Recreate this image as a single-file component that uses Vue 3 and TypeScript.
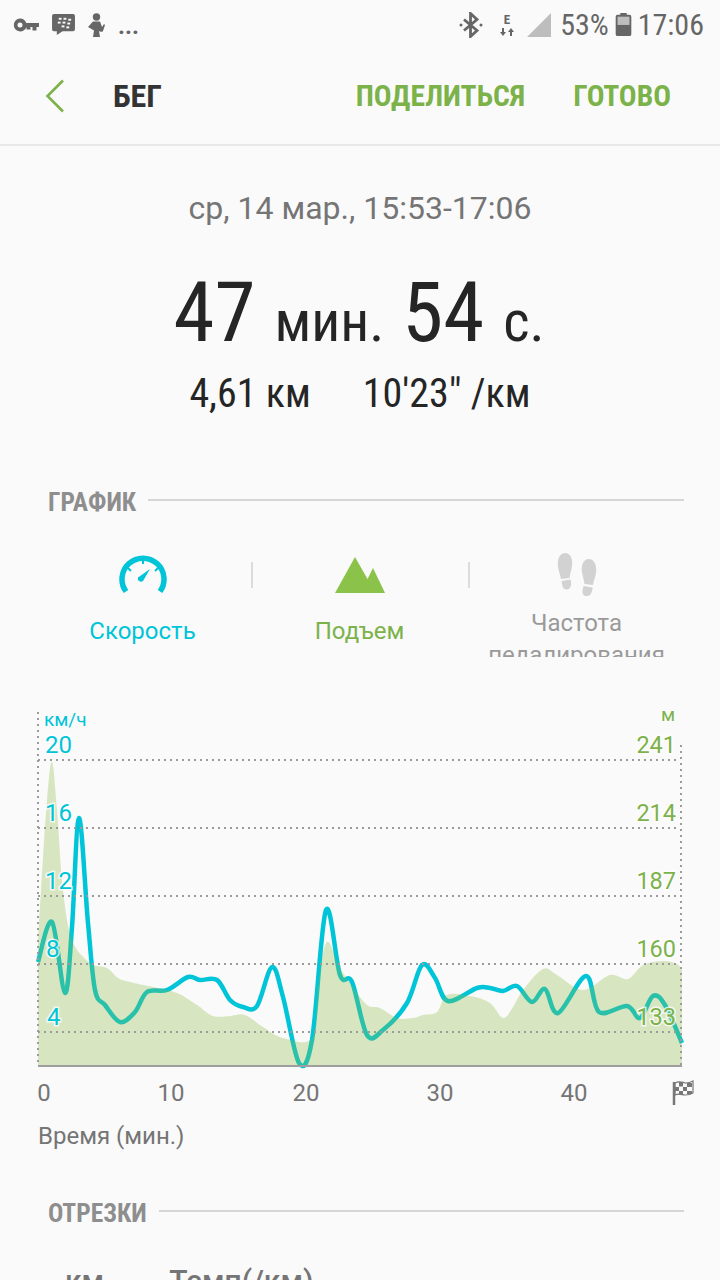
<template>
  <div class="page">
    <div class="status-bar">
      <div class="status-left">
        <svg class="ic" width="27" height="16" viewBox="0 0 27 16"><path fill="#666" fill-rule="evenodd" d="M7 1.500a6.500 6.500 0 0 1 6.200 4.500H26v4h-2.500v3.500h-4V10h-2v2.500h-4V10A6.500 6.500 0 1 1 7 1.500zm0 4a2.500 2.500 0 1 0 0 5 2.500 2.500 0 0 0 0-5z"/></svg>
        <svg class="ic" width="23" height="21" viewBox="0 0 24 22"><path fill="#666" d="M2 0h20a2 2 0 0 1 2 2v14a2 2 0 0 1-2 2H11l-6 4v-4H2a2 2 0 0 1-2-2V2a2 2 0 0 1 2-2z"/><g fill="#fafafa"><rect x="7" y="4" width="3" height="2"/><rect x="12" y="4" width="3" height="2"/><rect x="17" y="5" width="3" height="2"/><rect x="6" y="8" width="3" height="2"/><rect x="11" y="8" width="3" height="2"/><rect x="16" y="9" width="3" height="2"/><rect x="10" y="12" width="3" height="2"/><rect x="15" y="13" width="3" height="2"/></g></svg>
        <svg class="ic runner" width="19" height="24" viewBox="0 0 19 24"><circle cx="9.500" cy="4" r="3.700" fill="#666"/><path fill="#666" d="M6 8.500h7l2 5.500 2-3 1 1-2 6c-.5 1-2 1-3 .5l-1-.5 1 6H6l1-6.500L1 14l5-5.500z"/></svg>
        <span class="dots">...</span>
      </div>
      <div class="status-right">
        <svg class="ic" width="24" height="26" viewBox="0 0 24 26"><path fill="none" stroke="#666" stroke-width="2.800" d="M5 7.500l13 11-6.500 6V1.500l6.500 6-13 11"/><circle cx="2" cy="13" r="1.500" fill="#666"/><circle cx="22" cy="13" r="1.500" fill="#666"/></svg>
        <svg class="ic net" width="16" height="24" viewBox="0 0 16 24"><text x="8" y="11" text-anchor="middle" class="net-e">E</text><path fill="#666" d="M3 15h2v4h2l-3 4-3-4h2zM11 23h2v-4h2l-3-4-3 4h2z"/></svg>
        <svg class="ic signal" width="24" height="24" viewBox="0 0 24 24"><path fill="#bdbdbd" d="M24 0v24H0z"/></svg>
        <span class="pct">53%</span>
        <svg class="ic" width="17" height="23" viewBox="0 0 17 25"><path fill="#666" d="M5 0h7v2h3a2 2 0 0 1 2 2v19a2 2 0 0 1-2 2H2a2 2 0 0 1-2-2V4a2 2 0 0 1 2-2h3z"/><path fill="#bdbdbd" d="M2 4h13v9H2z"/></svg>
        <span class="clock">17:06</span>
      </div>
    </div>

    <header class="topbar">
      <svg class="back" width="20" height="34" viewBox="0 0 20 34"><path fill="none" stroke="#7cb24a" stroke-width="2.600" d="M18 1.500L2.500 17 18 32.500"/></svg>
      <h1 class="title"><span class="narrow">БЕГ</span></h1>
      <button class="action share"><span class="narrow">ПОДЕЛИТЬСЯ</span></button>
      <button class="action done"><span class="narrow">ГОТОВО</span></button>
    </header>

    <section class="summary">
      <div class="date">ср, 14 мар., 15:53-17:06</div>
      <div class="duration narrow">47<small>мин.</small>54<small>с.</small></div>
      <div class="stats narrow"><span>4,61 км</span><span>10'23" /км</span></div>
    </section>

    <div class="section-head first"><span class="narrow">ГРАФИК</span><i></i></div>

    <div class="tabs">
      <div class="tab speed">
        <svg width="48" height="38" viewBox="0 0 48 38"><path fill="none" stroke="#00c4d8" stroke-width="5.500" d="M7 35.500A21 21 0 1 1 41 35.500"/><path fill="#00c4d8" d="M31 13l-7 12a3.200 3.200 0 0 1-5-3.500z"/><path stroke="#00c4d8" stroke-width="2" d="M24 4v4M9 12l3 3M39 12l-3 3"/></svg>
        <span>Скорость</span>
      </div>
      <div class="tab climb">
        <svg width="50" height="36" viewBox="0 0 50 36"><path fill="#8bc34a" d="M0 36L20 0l12.500 22L38 11l12 25z"/></svg>
        <span>Подъем</span>
      </div>
      <div class="tab cadence">
        <svg width="40" height="44" viewBox="0 0 40 44"><g fill="#d2d2d2"><path d="M8 0c6 0 8 7 7 13-.5 4-2 8-2.500 12L4 26C3 20 0 15 1 8c.5-4 3-8 7-8z"/><path d="M4.500 28l9-1.500c1 3 1 7-1 9-2.500 2-6 1-7-2z"/><path d="M32 6c-6 0-8 7-7 13 .5 4 2 8 2.500 12l8.500 1c1-6 4-11 3-18-.5-4-3-8-7-8z"/><path d="M26.500 33l9 1.500c0 4-1.500 8-5 8.500-3.500.5-5.500-2-5-5z"/></g></svg>
        <span>Частота педалирования</span>
      </div>
    </div>

    <svg class="chart" width="720" height="420" viewBox="0 700 720 420">
      <path :d="linePath" fill="none" stroke="#00c4d8" stroke-width="4.500" stroke-linejoin="round" />
      <path :d="areaPath" fill="#88bb40" fill-opacity="0.3" />
      <g class="grid">
        <line v-for="y in gridY" :key="y" x1="38" x2="676" :y1="y" :y2="y" />
        <line x1="38" x2="38" y1="712" y2="1065" />
        <line x1="681" x2="681" y1="745" y2="1065" />
      </g>
      <line x1="38" x2="682" y1="1066" y2="1066" class="axis" />
      <text x="44" y="726" class="unit cyan">км/ч</text>
      <text x="675" y="721" class="unit green" text-anchor="end">м</text>
      <text v-for="l in leftLabels" :key="l.t" :x="l.x" :y="l.y" class="val cyan">{{ l.t }}</text>
      <text v-for="l in rightLabels" :key="l.t" x="676" :y="l.y" class="val green" text-anchor="end">{{ l.t }}</text>
      <text v-for="t in ticks" :key="t.t" :x="t.x" y="1101" class="tick" text-anchor="middle">{{ t.t }}</text>
      <g class="flag">
        <path d="M675 1083c5-3 8 0 11 0 3 0 5-1 7-2v12c-3 2-5 2-8 2-3 0-6-2-10 0z" fill="#fafafa" stroke="#777" stroke-width="1.200"/>
        <path d="M674 1082v23" stroke="#777" stroke-width="2.500"/>
        <path d="M679 1082h4v4.500h-4zM687 1083h5v4h-5zM675 1087h4v4h-4zM683 1087h4v4h-4zM679 1091h4v4h-4zM687 1091h5v3h-5z" fill="#777"/>
      </g>
    </svg>

    <div class="axis-title">Время (мин.)</div>

    <div class="section-head second"><span class="narrow">ОТРЕЗКИ</span><i></i></div>

    <div class="table-head"><span class="c1">км</span><span class="c2">Темп(/км)</span></div>
  </div>
</template>

<script setup lang="ts">
type Pt = [number, number]

const gridY = [760, 828, 896, 964, 1032]

const leftLabels = [
  { t: '20', x: 45, y: 753 },
  { t: '16', x: 45, y: 821 },
  { t: '12', x: 45, y: 889 },
  { t: '8', x: 46, y: 957 },
  { t: '4', x: 47, y: 1025 },
]
const rightLabels = [
  { t: '241', y: 753 },
  { t: '214', y: 821 },
  { t: '187', y: 889 },
  { t: '160', y: 957 },
  { t: '133', y: 1025 },
]
const ticks = [
  { t: '0', x: 44 },
  { t: '10', x: 171 },
  { t: '20', x: 306 },
  { t: '30', x: 440 },
  { t: '40', x: 574 },
]

// speed curve, traced from the run
const speed: Pt[] = [
  [38, 962], [52, 922], [65, 993], [72, 927], [79, 818], [88, 923], [95, 990], [105, 1005],
  [120, 1022], [135, 1012], [147, 992], [167, 990], [188, 977], [200, 980], [217, 980], [230, 1000],
  [243, 1007], [257, 1006], [272, 967], [283, 997], [299, 1063], [312, 1040], [326, 910],
  [340, 975], [352, 982], [367, 1035], [383, 1030], [407, 1003], [422, 965], [435, 978],
  [448, 1001], [477, 988], [490, 988], [503, 991], [517, 986], [532, 1002], [545, 989],
  [558, 1013], [586, 976], [599, 1012], [627, 1006], [640, 1018], [653, 996], [665, 1005], [682, 1043],
]

const elevation: Pt[] = [
  [38, 940], [41, 890], [47, 800], [52, 762], [57, 810], [63, 890], [72, 940], [90, 963], [107, 968],
  [118, 978], [130, 982], [153, 987], [177, 993], [197, 1005], [213, 1016], [230, 1016],
  [245, 1015], [263, 1027], [283, 1038], [312, 1038], [318, 985], [327, 942], [340, 968],
  [353, 987], [367, 1005], [380, 1008], [397, 1018], [413, 1018], [423, 1015], [437, 1012],
  [447, 995], [470, 996], [490, 1003], [503, 1018], [513, 1007], [523, 990], [543, 969],
  [557, 975], [583, 990], [610, 975], [628, 979], [643, 965], [663, 961], [677, 964], [682, 970],
]

// catmull-rom through the points so the curves stay soft
function smooth(pts: Pt[]): string {
  let d = `M${pts[0][0]} ${pts[0][1]}`
  for (let i = 0; i < pts.length - 1; i++) {
    const p0 = pts[i - 1] ?? pts[i]
    const p1 = pts[i]
    const p2 = pts[i + 1]
    const p3 = pts[i + 2] ?? p2
    const c1x = p1[0] + (p2[0] - p0[0]) / 6
    const c1y = p1[1] + (p2[1] - p0[1]) / 6
    const c2x = p2[0] - (p3[0] - p1[0]) / 6
    const c2y = p2[1] - (p3[1] - p1[1]) / 6
    d += `C${c1x.toFixed(1)} ${c1y.toFixed(1)} ${c2x.toFixed(1)} ${c2y.toFixed(1)} ${p2[0]} ${p2[1]}`
  }
  return d
}

const linePath = smooth(speed)
const areaPath = `${smooth(elevation)}L682 1065L38 1065Z`
</script>

<style>
html,
body {
  margin: 0;
  background: #fafafa;
}
</style>

<style scoped>
.page {
  width: 720px;
  height: 1280px;
  overflow: hidden;
  background: #fafafa;
  font-family: Roboto, "Liberation Sans", sans-serif;
  color: #252525;
}

.narrow {
  font-stretch: 75%;
}

/* status bar */
.status-bar {
  height: 48px;
  display: flex;
  justify-content: space-between;
  align-items: center;
  padding: 1px 16px 0 13px;
  box-sizing: border-box;
}
.status-left,
.status-right {
  display: flex;
  align-items: center;
}
.ic {
  display: block;
}
.status-left {
  gap: 12px;
}
.dots {
  font-size: 24px;
  font-weight: 700;
  color: #666;
  line-height: 24px;
  margin-top: 2px;
}
.status-right {
  gap: 6px;
  color: #666;
  font-size: 30px;
  font-stretch: 75%;
}
.net-e {
  font-size: 13px;
  font-weight: 700;
  fill: #666;
}
.net {
  margin: 0 6px 0 10px;
}
.signal {
  margin-right: 3px;
}

/* top bar */
.topbar {
  height: 96px;
  display: flex;
  align-items: center;
  padding: 0 49px 0 45px;
  border-bottom: 2px solid #e8e8e8;
}
.back {
  margin-right: 48px;
}
.title {
  margin: 0;
  flex: 1;
  font-size: 32px;
  font-weight: 700;
  color: #333;
}
.action {
  border: 0;
  padding: 0;
  background: none;
  font-family: inherit;
  font-size: 29.500px;
  font-weight: 700;
  color: #7cb24a;
}
.share {
  margin-right: 48px;
}

/* summary */
.summary {
  display: flex;
  flex-direction: column;
  align-items: center;
}
.date {
  margin-top: 44px;
  font-size: 32px;
  line-height: 36px;
  color: #757575;
}
.duration {
  margin-top: 37px;
  font-size: 83px;
  line-height: 100px;
}
.duration small {
  font-size: 57px;
  margin: 0 18px 0 19px;
}
.duration small:last-child {
  margin-right: 2px;
}
.stats {
  margin-top: 0;
  display: flex;
  gap: 52px;
  font-size: 40px;
  line-height: 44px;
}

/* section headings */
.section-head {
  display: flex;
  align-items: center;
  gap: 12px;
  padding: 0 36px 0 48px;
  font-size: 25.500px;
  font-weight: 700;
  color: #8e8e8e;
  line-height: 34px;
}
.section-head i {
  flex: 1;
  height: 2px;
  background: #d6d6d6;
  margin-bottom: 4px;
}
.section-head.first {
  margin-top: 69px;
}
.section-head.second {
  margin-top: 44px;
}

/* chart selector */
.tabs {
  margin: 34px 35px 0 34px;
  display: grid;
  grid-template-columns: repeat(3, 217px);
  height: 104px;
  overflow: hidden;
}
.tab {
  display: flex;
  flex-direction: column;
  align-items: center;
  font-size: 24px;
  line-height: 32px;
  text-align: center;
  position: relative;
}
.tab svg {
  display: block;
  height: 44px;
  margin-bottom: 18px;
}
.tab + .tab::before {
  content: "";
  position: absolute;
  left: 0;
  top: 9px;
  width: 2px;
  height: 26px;
  background: #dcdcdc;
}
.speed {
  color: #00c4d8;
}
.climb {
  color: #7cb24a;
}
.cadence {
  color: #9a9a9a;
}
.cadence span {
  display: block;
  width: 190px;
  margin-top: -8px;
}

/* chart */
.chart {
  display: block;
  margin-top: 43px;
}
.grid line {
  stroke: #9b9b9b;
  stroke-width: 2;
  stroke-dasharray: 2 4;
}
.axis {
  stroke: #9e9e9e;
  stroke-width: 2;
}
.unit {
  font-size: 19px;
}
.val {
  font-size: 24px;
  paint-order: stroke;
  stroke: rgba(255, 255, 255, 0.75);
  stroke-width: 3px;
}
.val.green {
  font-size: 23.500px;
}
.cyan {
  fill: #00c4d8;
}
.green {
  fill: #7cb24a;
}
.tick {
  font-size: 24px;
  fill: #757575;
}
.axis-title {
  padding-left: 38px;
  font-size: 24px;
  line-height: 32px;
  color: #757575;
}

/* splits table head, cut off by the screen edge */
.table-head {
  margin-top: 33px;
  display: flex;
  font-size: 30px;
  font-weight: 500;
  color: #757575;
}
.c1 {
  margin-left: 65px;
}
.c2 {
  margin-left: 65px;
}
</style>
